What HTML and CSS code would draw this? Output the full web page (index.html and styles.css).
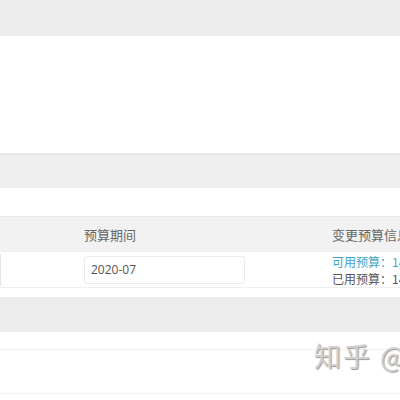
FILE: index.html
```html
<!DOCTYPE html>
<html lang="zh">
<head>
<meta charset="utf-8">
<link rel="stylesheet" href="styles.css">
</head>
<body>
<div class="page">
  <div class="topbar"></div>
  <div class="blank"></div>
  <div class="section-bar"></div>
  <div class="gap1"></div>
  <div class="thead">
    <div class="col c1"></div>
    <div class="col c2">预算期间</div>
    <div class="col c3">变更预算信息</div>
  </div>
  <div class="trow">
    <div class="col c1"><div class="edgebox"></div></div>
    <div class="col c2"><div class="inputbox">2020-07</div></div>
    <div class="col c3 info">
      <div class="avail">可用预算：148,000.00</div>
      <div class="used">已用预算：14,000.00</div>
    </div>
  </div>
  <div class="gap2"></div>
  <div class="band"></div>
  <div class="gap3"></div>
  <div class="lower">
    <div class="watermark">知乎 @用户</div>
  </div>
</div>
</body>
</html>
```
FILE: styles.css
```css
html, body { margin: 0; padding: 0; }
body {
  background: #ffffff;
  font-family: "Noto Sans CJK SC", "Microsoft YaHei", sans-serif;
  color: #666;
  overflow: hidden;
  width: 400px;
  height: 400px;
}
.page { width: 400px; }
.topbar { height: 36px; background: #ededed; }
.blank { height: 117px; background: #fff; }
.section-bar {
  height: 33px;
  background: #efefef;
  border-top: 2px solid #e7e7e7;
}
.gap1 { height: 28px; }
.thead {
  height: 35px;
  background: #f2f2f2;
  border-top: 1px solid #e9e9e9;
  display: flex;
  align-items: center;
  font-size: 13px;
  color: #666;
}
.col { box-sizing: border-box; }
.c1 { width: 84px; }
.c2 { width: 248px; }
.c3 { flex: 1; white-space: nowrap; overflow: hidden; }
.trow {
  height: 35px;
  display: flex;
  align-items: center;
  border-bottom: 1px solid #eeeeee;
  font-size: 12px;
}
.edgebox {
  width: 2px;
  height: 30px;
  border: 1px solid #e6e6e6;
  border-left: none;
  margin-left: -2px;
}
.inputbox {
  width: 161px;
  height: 28px;
  box-sizing: border-box;
  border: 1px solid #ececec;
  border-radius: 3px;
  padding-left: 6px;
  line-height: 26px;
  font-size: 12px;
  color: #555;
  font-family: "Open Sans", "Noto Sans CJK SC", sans-serif;
}
.info { line-height: 17px; font-size: 12px; }
.avail { color: #3ea3c9; }
.used { color: #555; }
.gap2 { height: 9px; }
.band { height: 35px; background: #ededed; }
.gap3 { height: 17px; }
.lower {
  height: 43px;
  border-top: 1px solid #f0f0f0;
  border-bottom: 1px solid #f0f0f0;
  position: relative;
}
.watermark {
  position: absolute;
  left: 314px;
  top: -14px;
  font-size: 27px;
  color: #d0d0d0;
  white-space: nowrap;
  text-shadow: 1px 1px 1px #999;
  letter-spacing: 2px;
}
```
